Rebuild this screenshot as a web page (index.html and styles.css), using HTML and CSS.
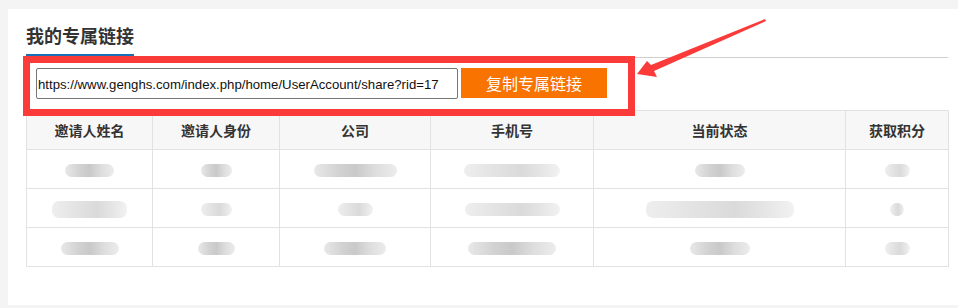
FILE: index.html
```html
<!DOCTYPE html>
<html lang="zh-CN">
<head>
    <meta charset="UTF-8">
    <title>我的专属链接</title>
    <link rel="stylesheet" href="styles.css">
</head>
<body>
    <div class="panel">
        <div class="panel-head">
            <h2 class="panel-title">我的专属链接</h2>
        </div>

        <div class="share-box">
            <input type="text" class="share-input" value="https://www.genghs.com/index.php/home/UserAccount/share?rid=17" readonly>
            <button type="button" class="share-btn">复制专属链接</button>
        </div>

        <table class="invite-table">
            <colgroup>
                <col class="c1"><col class="c2"><col class="c3"><col class="c4"><col class="c5"><col class="c6">
            </colgroup>
            <thead>
                <tr>
                    <th>邀请人姓名</th>
                    <th>邀请人身份</th>
                    <th>公司</th>
                    <th>手机号</th>
                    <th>当前状态</th>
                    <th>获取积分</th>
                </tr>
            </thead>
            <tbody>
                <!-- personal data is mosaicked in the screenshot -->
                <tr>
                    <td><span class="mask" style="width:49px"></span></td>
                    <td><span class="mask" style="width:31px"></span></td>
                    <td><span class="mask" style="width:83px"></span></td>
                    <td><span class="mask light" style="width:96px"></span></td>
                    <td><span class="mask" style="width:50px"></span></td>
                    <td><span class="mask light" style="width:25px"></span></td>
                </tr>
                <tr>
                    <td><span class="mask light tall" style="width:75px"></span></td>
                    <td><span class="mask light" style="width:31px"></span></td>
                    <td><span class="mask light" style="width:35px"></span></td>
                    <td><span class="mask light" style="width:95px"></span></td>
                    <td><span class="mask light tall" style="width:148px"></span></td>
                    <td><span class="mask light" style="width:14px"></span></td>
                </tr>
                <tr>
                    <td><span class="mask" style="width:58px"></span></td>
                    <td><span class="mask" style="width:37px"></span></td>
                    <td><span class="mask" style="width:62px"></span></td>
                    <td><span class="mask" style="width:88px"></span></td>
                    <td><span class="mask" style="width:60px"></span></td>
                    <td><span class="mask light" style="width:25px"></span></td>
                </tr>
            </tbody>
        </table>
    </div>

    <!-- annotation arrow pointing at the link box -->
    <svg class="arrow" width="958" height="308" viewBox="0 0 958 308">
        <polygon points="637,74 647,61 651,65 765,19 766,21 654,71 657,77" fill="#fb3a3a"/>
    </svg>
</body>
</html>
```

FILE: styles.css
```css
body {
    margin: 0;
    background-color: #f4f4f4;
    font-family: "Noto Sans", "Noto Sans CJK SC", sans-serif;
    color: #333;
}

.panel {
    margin: 9px 0 0 8px;
    height: 296px;
    padding: 0 10px 0 18px;
    background-color: #fff;
}

.panel-head {
    padding-top: 17px;
    border-bottom: 1px solid #cfcfcf;
}

.panel-title {
    display: inline-block;
    margin: 0 0 1px 0;
    height: 28px;
    line-height: 19px;
    font-size: 18px;
    font-weight: bold;
    font-family: "Noto Sans CJK SC", sans-serif;
    color: #333;
    border-bottom: 2px solid #1a6fb8;
}

.share-box {
    position: relative;
    z-index: 1;
    display: flex;
    align-items: flex-start;
    gap: 3px;
    width: 592px;
    height: 41px;
    margin: -2px 0 0 -3px;
    padding: 5px 0 0 6px;
    border: 7px solid #fb3a3a;
}

.share-input {
    width: 422px;
    height: 31px;
    box-sizing: border-box;
    padding: 1px 1px 0;
    font-size: 13.2px;
    font-family: "Liberation Sans", Arial, sans-serif;
    color: #111;
    border: 1px solid #767676;
    border-radius: 2px;
    outline: none;
}

.share-btn {
    width: 146px;
    height: 30px;
    padding: 0;
    font-size: 16px;
    font-family: "Noto Sans CJK SC", sans-serif;
    color: #fff;
    background-color: #f97300;
    border: none;
    cursor: pointer;
}

.invite-table {
    width: 922px;
    margin-top: -6px;
    border-collapse: collapse;
    table-layout: fixed;
    font-size: 14px;
}

.c1 { width: 126px; }
.c2 { width: 127px; }
.c3 { width: 151px; }
.c4 { width: 163px; }
.c5 { width: 252px; }
.c6 { width: 103px; }

.invite-table th,
.invite-table td {
    height: 38px;
    padding: 0;
    text-align: center;
    border: 1px solid #e2e2e2;
}

.invite-table th {
    background-color: #f7f7f7;
    font-weight: bold;
    font-family: "Noto Sans CJK SC", sans-serif;
    color: #333;
}

.mask {
    display: inline-block;
    height: 13px;
    vertical-align: middle;
    border-radius: 7px;
    background: linear-gradient(90deg, #e8e8e8 0%, #d2d2d2 30%, #c9c9c9 50%, #dedede 75%, #ececec 100%);
    filter: blur(0.6px);
}

.mask.light {
    background: linear-gradient(90deg, #eeeeee 0%, #e2e2e2 35%, #dadada 60%, #e8e8e8 85%, #f2f2f2 100%);
}

.mask.tall {
    height: 17px;
}

.arrow {
    position: absolute;
    left: 0;
    top: 0;
    pointer-events: none;
}
```
